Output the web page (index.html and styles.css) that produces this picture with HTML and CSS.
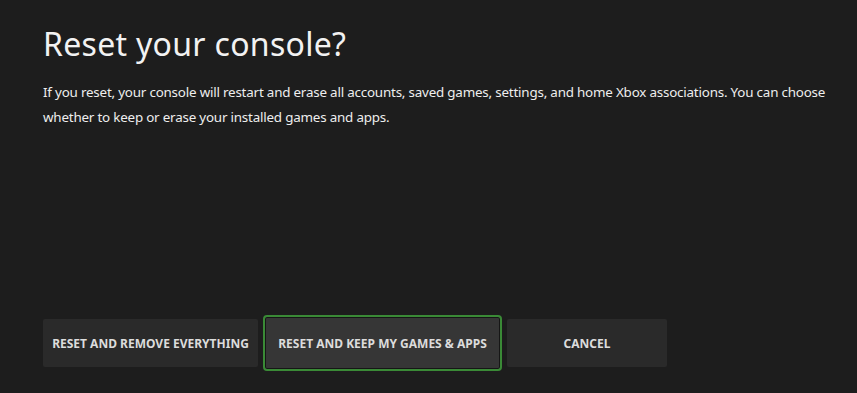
FILE: index.html
```html
<!DOCTYPE html>
<html>
<head>
<meta charset="utf-8">
<link rel="stylesheet" href="styles.css">
</head>
<body>
<div class="page">
  <h1 class="title">Reset your console?</h1>
  <p class="desc">If you reset, your console will restart and erase all accounts, saved games, settings, and home Xbox associations. You can choose whether to keep or erase your installed games and apps.</p>
  <div class="spacer"></div>
  <div class="actions">
    <button class="btn btn-remove">RESET AND REMOVE EVERYTHING</button>
    <button class="btn btn-keep focused">RESET AND KEEP MY GAMES &amp; APPS</button>
    <button class="btn btn-cancel">CANCEL</button>
  </div>
</div>
</body>
</html>
```
FILE: styles.css
```css
html, body {
  margin: 0;
  padding: 0;
  background: #1d1d1d;
  width: 857px;
  height: 393px;
  overflow: hidden;
}
.page {
  box-sizing: border-box;
  height: 393px;
  padding: 22px 20px 22px 43px;
  display: flex;
  flex-direction: column;
  font-family: "Noto Sans", "Open Sans", sans-serif;
  color: #f2f2f2;
}
.title {
  margin: 0;
  font-weight: 400;
  font-size: 32px;
  line-height: 44px;
  letter-spacing: 0.3px;
}
.desc {
  margin: 14px 0 0 0;
  font-size: 13.4px;
  line-height: 25px;
  letter-spacing: -0.2px;
  color: #eeeeee;
}
.spacer { flex: 1; }
.actions {
  display: flex;
  align-items: center;
  gap: 5px;
}
.btn {
  font-family: "Noto Sans", "Open Sans", sans-serif;
  font-weight: 700;
  font-size: 12px;
  color: #dcdcdc;
  background: #2a2a2a;
  border: none;
  border-radius: 2px;
  height: 48px;
  padding: 0;
  letter-spacing: 0;
}
.btn-remove { width: 215px; }
.btn-keep {
  width: 239px;
  height: 56px;
  background: #363636;
  border: 2px solid #3a8a36;
  border-radius: 4px;
  box-shadow: inset 0 0 0 1px #161616;
}
.btn-cancel { width: 160px; }
```
